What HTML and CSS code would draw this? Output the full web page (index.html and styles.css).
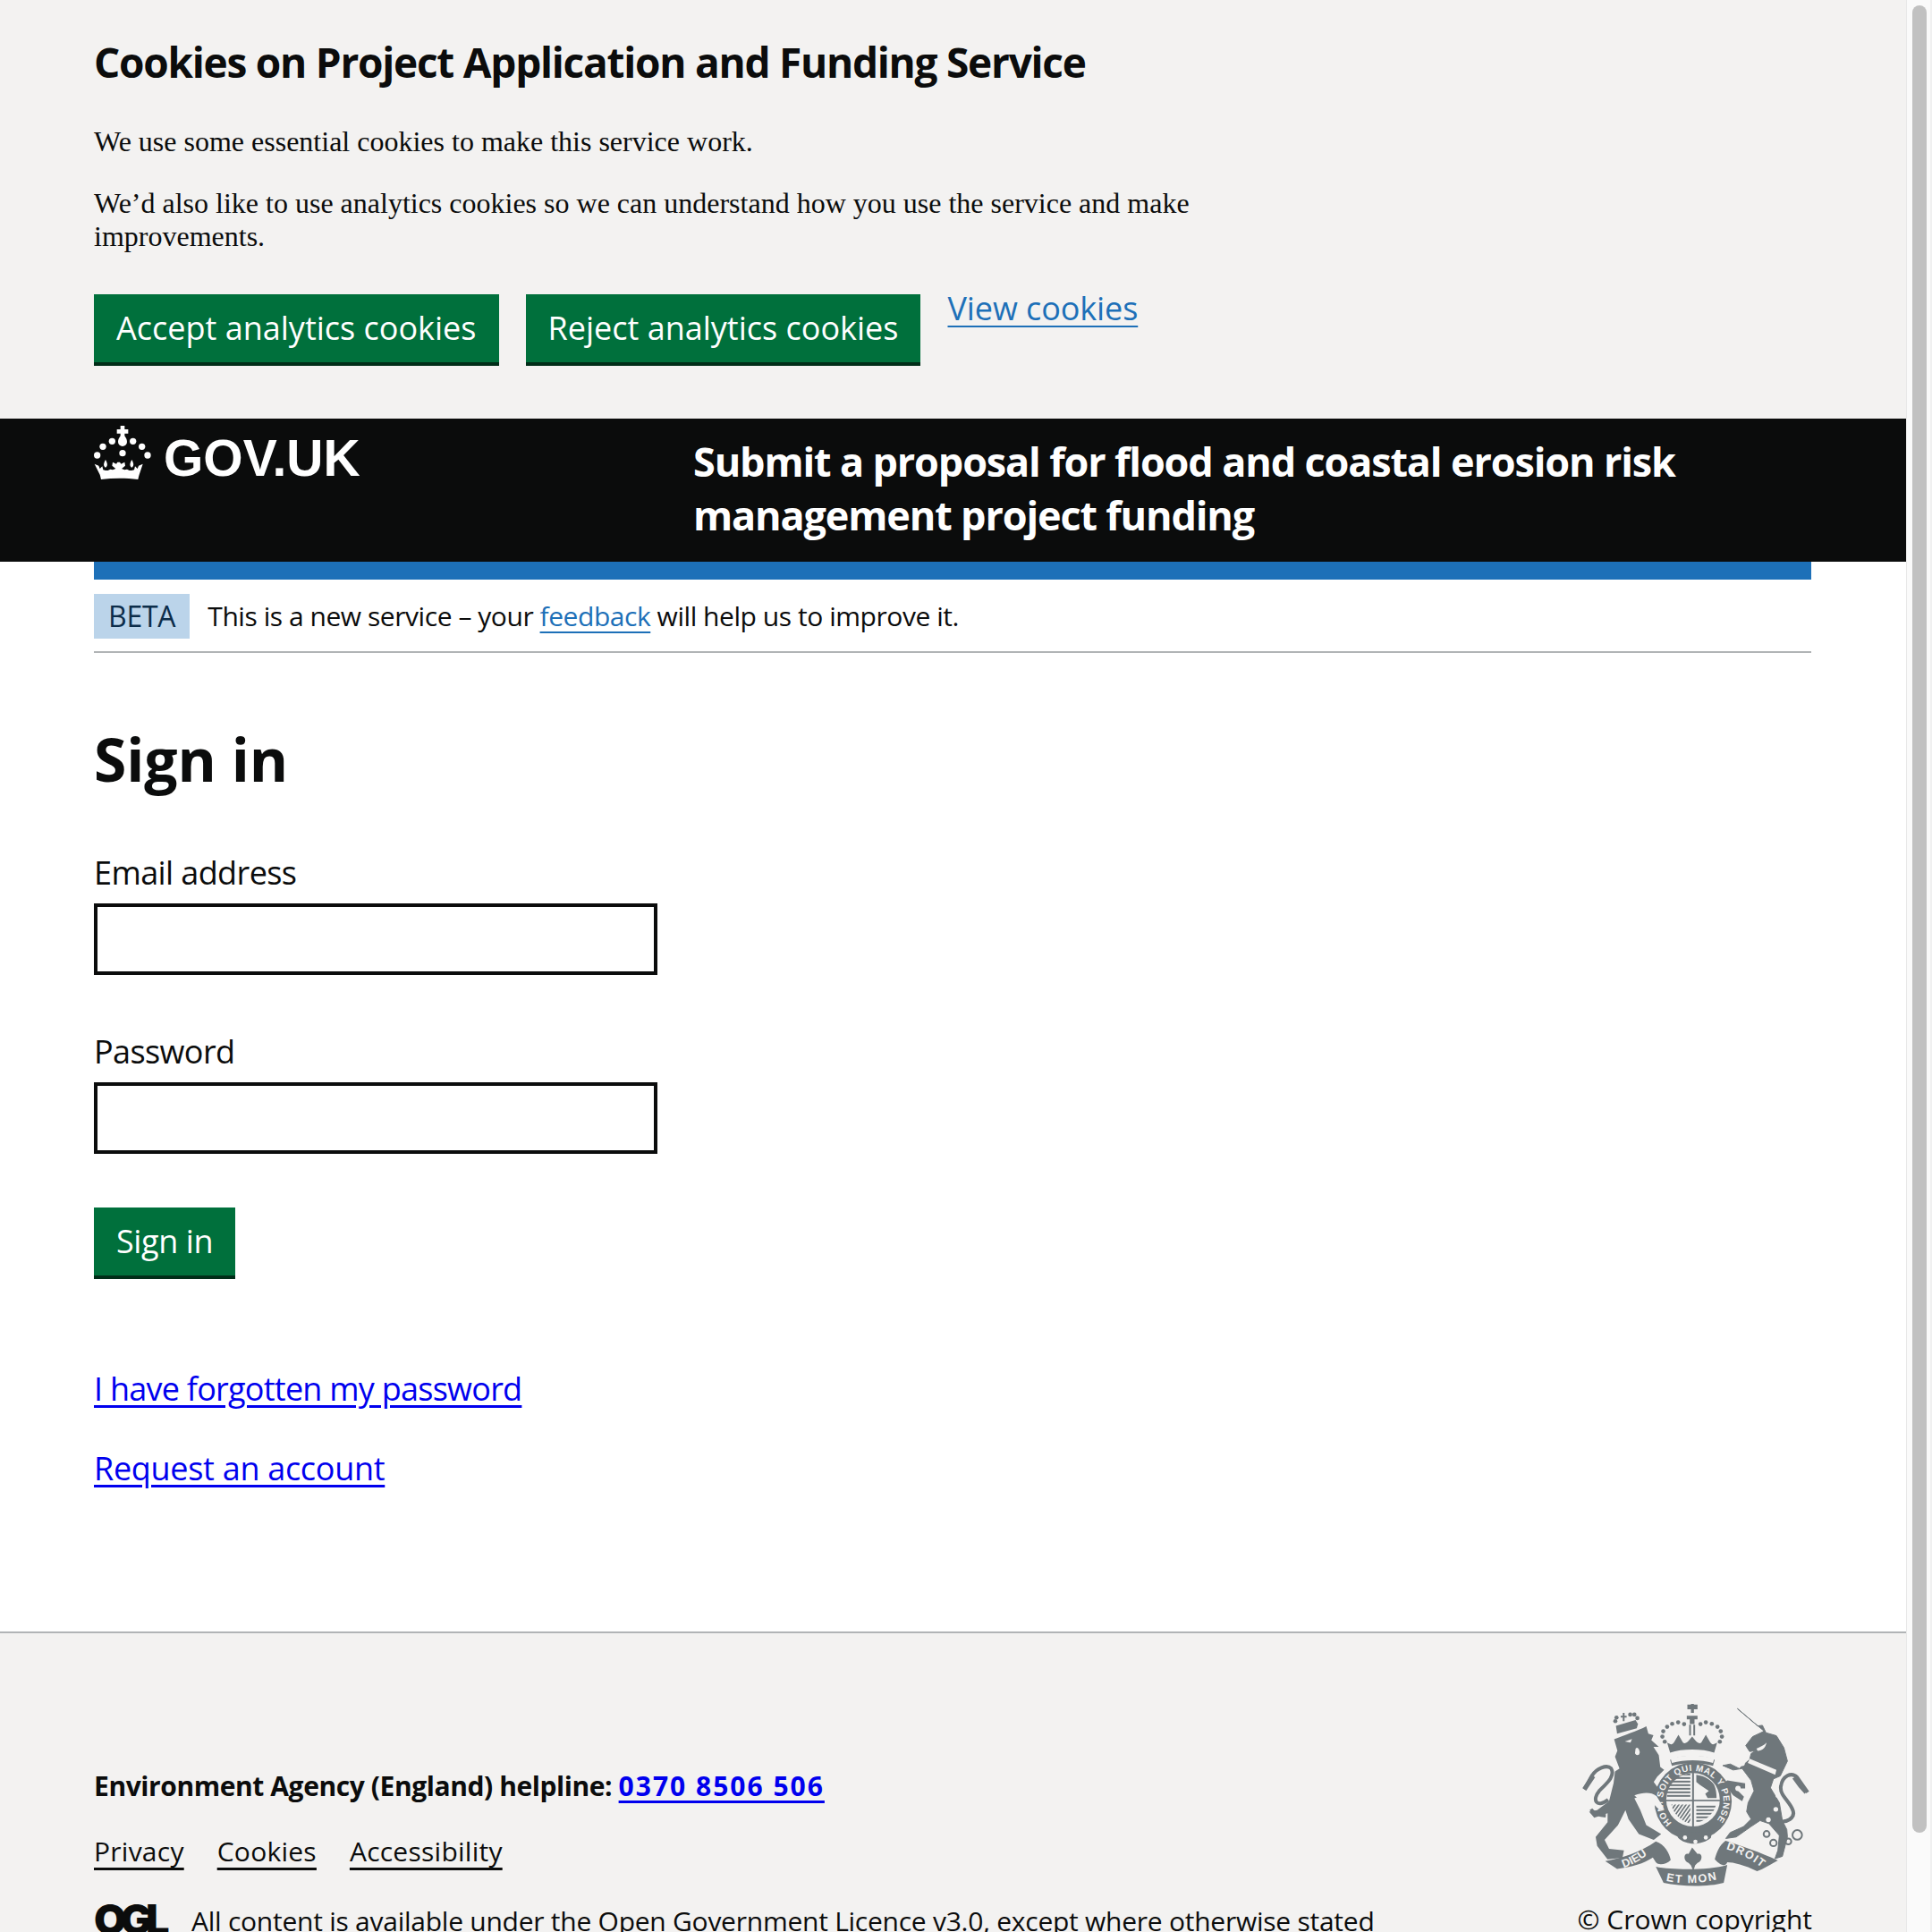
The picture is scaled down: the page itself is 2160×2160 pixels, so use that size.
FILE: index.html
```html
<!DOCTYPE html>
<html lang="en">
<head>
<meta charset="utf-8">
<title>Sign in</title>
<link rel="stylesheet" href="styles.css">
</head>
<body>
<div class="viewport">
<div class="page">
  <section class="cookie-banner">
    <h2 class="cookie-title">Cookies on Project Application and Funding Service</h2>
    <div class="cookie-body">
      <p>We use some essential cookies to make this service work.</p>
      <p>We’d also like to use analytics cookies so we can understand how you use the service and make improvements.</p>
    </div>
    <div class="cookie-actions">
      <button class="btn">Accept analytics cookies</button>
      <button class="btn">Reject analytics cookies</button>
      <a class="link cookie-link" href="#">View cookies</a>
    </div>
  </section>

  <header class="header">
    <a class="logo" href="#">
      <svg class="crown" viewBox="315 108 192 180" aria-hidden="true">
        <g fill="#fff">
          <path d="M404 108h14v12h12v14h-12v8c6 8 8 14 8 20a15 15 0 0 1-30 0c0-6 2-12 8-20v-8h-12v-14h12z"/>
          <circle cx="345" cy="178" r="11"/><circle cx="376" cy="160" r="11"/><circle cx="446" cy="160" r="11"/><circle cx="476" cy="178" r="11"/>
          <circle cx="326" cy="207" r="11"/><circle cx="495" cy="207" r="11"/><circle cx="411" cy="200" r="11"/>
          <path d="M317 236l14 6 4 10 8-8 3 12 8 2v-10c-6-4-9-10 0-26 9 16 6 22 0 26v10h8l8-4 8 2 10-4-12-10 2-12 12 6 4-6 8 0 4 6 12-6 2 12-12 10 10 4 8-2 8 4h8v-10c-6-4-9-10 0-26 9 16 6 22 0 26v10l8-2 3-12 8 8 4-10 14-6-12 36c-2 6-3 12-4 16-40-5-84-5-124 0-1-4-2-10-4-16z"/>
        </g>
      </svg>
      <span class="logo-text">GOV.UK</span>
    </a>
    <div class="service-name">Submit a proposal for flood and coastal erosion risk management project funding</div>
  </header>

  <div class="container">
    <div class="blue-bar"></div>
    <div class="phase-banner">
      <strong class="tag">BETA</strong>
      <span class="phase-text">This is a new service – your <a class="link" href="#">feedback</a> will help us to improve it.</span>
    </div>
    <main class="main">
      <h1 class="title">Sign in</h1>
      <form class="form">
        <label class="label" for="email">Email address</label>
        <input class="input" id="email" type="email">
        <label class="label label-second" for="password">Password</label>
        <input class="input" id="password" type="password">
        <button class="btn btn-signin" type="button">Sign in</button>
      </form>
      <p class="plain-link first"><a href="#">I have forgotten my password</a></p>
      <p class="plain-link second"><a href="#">Request an account</a></p>
    </main>
  </div>

  <footer class="footer">
    <div class="footer-inner">
      <div class="footer-left">
        <p class="helpline">Environment Agency (England) helpline: <a href="#">0370 8506 506</a></p>
        <ul class="footer-links">
          <li><a href="#">Privacy</a></li>
          <li><a href="#">Cookies</a></li>
          <li><a href="#">Accessibility</a></li>
        </ul>
        <div class="licence">
          <span class="ogl">OGL</span>
          <span class="licence-text">All content is available under the Open Government Licence v3.0, except where otherwise stated</span>
        </div>
      </div>
      <div class="footer-right">
        <svg class="crest" viewBox="80 70 760 620" aria-hidden="true">
          <defs>
            <path id="garter" d="M384 478A102 102 0 1 1 526 478"/>
            <path id="scroll-a" d="M222 628c35-12 70-32 106-66"/>
            <path id="scroll-b" d="M364 672c50 12 122 10 176-6"/>
            <path id="scroll-c" d="M566 566c44 12 88 36 124 66"/>
            <pattern id="lines" width="12" height="12" patternUnits="userSpaceOnUse"><rect width="12" height="6" fill="#6f777b"/></pattern>
            <pattern id="diag" width="10" height="10" patternUnits="userSpaceOnUse" patternTransform="rotate(35)"><rect width="5" height="10" fill="#6f777b"/></pattern>
          </defs>
          <g fill="#6f777b">
            <!-- lion -->
            <path d="M190 197C220 184 270 168 298 153l7 25 17 5-7 17 25 22-18 0 18 28 5 40 13 10-23 22-12 18 25 35 15 50-25 5-25-35-25-10-30 10 20 40 20 50 50 30-25 20-50-20-35-50-10-30-25 50-45 50 15 30 50 5-5 25-50 5-35-45-5-30 40-50v-30l-45 15-17-20 27-5 40-30 15-60 5-40 15-10-15-40 8-20z"/>
            <!-- lion crown -->
            <path d="M196 152l66-20 8 14-4 14-66 18z"/>
            <path d="M212 118h7v-10h6v10h7v6h-7v12h-6v-12h-7z"/>
            <circle cx="194" cy="136" r="7"/><circle cx="198" cy="124" r="7"/><circle cx="244" cy="114" r="7"/><circle cx="258" cy="114" r="7"/><circle cx="268" cy="126" r="7"/>
            <!-- unicorn -->
            <path stroke="#6f777b" stroke-width="3" d="M604 94L672 152l16-2 12 25 35 10 25 40 12 45-24 50-23 10-10 30 30 50 10 60 15 30 2 25-17 65-25 8 10-28 5-50-35-40-30-10-30 20-50 35-35 5 15-20 45-20 25-25-15-25 5-30 20-40-10-35-15-20-15-20-30 5-35-15 25-5 30 15 35-30 5-20 15-10-20 3-13-20 23-30 32-15 6-4z"/>
            <path d="M630 345l-60-10-12 10 32 40 30 20 6-15-28-28 32 0z"/>
            <!-- crown -->
            <path d="M436 80h12v-2h10v2h12v16h-12v12h-10V96h-12z"/>
            <path d="M434 118h36v12h-36zM444 130h16v16h-16zM442 148h6v36h-6zM456 148h6v36h-6z"/>
            <path d="M368 208c12 6 16 10 24-2l14-24 14 24c4 8 12 4 20-4l12-14 12 14c8 8 16 12 20 4l14-24 14 24c8 12 12 8 24 2l-10 34c-40-14-108-14-148 0z"/>
            <path d="M378 266c40-18 110-18 150 0l-6 20c-40-12-96-12-138 0z"/>
            <!-- garter -->
            <circle cx="455" cy="405" r="130"/>
            <!-- scrolls -->
            <path d="M160 606c50-8 120-30 170-66 30 10 46 40 50 62-12 14-40 20-50 8l-10-16c-30 20-70 32-120 38z"/>
            <path d="M330 625c60 12 180 12 240-6l-12 60c-50 14-140 14-202 0z"/>
            <path d="M528 600c6-20 14-46 36-62 50 16 120 40 176 66-16 8-50 30-70 36-40-20-80-30-100-30-4 14-20 14-42-10z"/>
            <path d="M452 560l18 22c16-6 20 22 0 30l-8 8-6 20-8-20-8-8c-20-8-16-36 0-30z"/>
            <path d="M395 500c40 14 90 14 125 0l-5 28c-30 26-85 26-110 0z"/>
          </g>
          <g fill="none" stroke="#6f777b">
            <path d="M170 400c-40 30-55 0-30-30 25-25 55-50 40-75-15-15-50 0-65 25l-25 45" stroke-width="12"/>
            <path d="M120 320c-10 15-20 30-30 45" stroke-width="15"/>
            <path d="M112 432c10 14 30 20 50 22" stroke-width="11"/>
            <path d="M740 470c30 10 60-10 50-35-10-30-45-50-40-80 5-35 35-50 55-30l35 50" stroke-width="12"/>
            <path d="M795 325c10 15 25 35 40 50" stroke-width="15"/>
            <circle cx="702" cy="515" r="10" stroke-width="6"/><circle cx="725" cy="545" r="11" stroke-width="6"/><circle cx="775" cy="540" r="10" stroke-width="6"/><circle cx="805" cy="518" r="16" stroke-width="6"/>
          </g>
          <g fill="#6f777b">
            <circle cx="385" cy="145" r="7"/><circle cx="405" cy="140" r="7"/><circle cx="425" cy="146" r="7"/><circle cx="368" cy="155" r="7"/><circle cx="355" cy="170" r="7"/><circle cx="352" cy="188" r="7"/><circle cx="360" cy="205" r="7"/>
            <circle cx="480" cy="146" r="7"/><circle cx="498" cy="140" r="7"/><circle cx="518" cy="145" r="7"/><circle cx="537" cy="155" r="7"/><circle cx="548" cy="170" r="7"/><circle cx="552" cy="188" r="7"/><circle cx="545" cy="205" r="7"/>
          </g>
          <g fill="#f3f2f1">
            <path d="M380 262c40-14 105-14 146 0l-4 14c-40-12-96-12-138 0z"/>
            <circle cx="455" cy="400" r="90"/>
            <circle cx="428" cy="527" r="7"/><circle cx="463" cy="541" r="7"/><circle cx="498" cy="527" r="7"/>
            <circle cx="620" cy="278" r="9"/><circle cx="606" cy="362" r="9"/><circle cx="740" cy="385" r="8"/><circle cx="733" cy="432" r="8"/><circle cx="708" cy="467" r="8"/>
            <path d="M226 204l24-8-5 12zM262 228a9 14 0 0 1 12 20 10 10 0 0 1-14-4z"/>
            <path d="M258 385c30-10 55-12 75 3l25 42-15 5-25-25-20 0c-15-5-30-15-40-25z"/>
            <path d="M645 262l90 38-4 16-92-40z"/>
            <path d="M668 228c14-6 24-10 34-20-4 18-14 26-30 28z"/>
          </g>
          <g fill="#6f777b">
            <rect x="362" y="400" width="186" height="5"/><rect x="452" y="308" width="6" height="190"/>
            <path fill="url(#lines)" d="M374 330l72-20v84h-78c-2-24 0-44 6-64z"/>
            <path d="M466 316c30 4 50 18 60 34 6 14 8 28 8 44h-30l-8-14 12-10-30-20-12-10z"/>
            <path fill="url(#diag)" d="M382 416h64v64c-30-8-56-30-64-64z"/>
            <path fill="url(#lines)" d="M466 416h66c-6 30-34 54-66 62z"/>
          </g>
          <g class="crest-text">
            <text class="garter-text"><textPath href="#garter" textLength="470" lengthAdjust="spacing">HONI SOIT QUI MAL Y PENSE</textPath></text>
            <text><textPath href="#scroll-a">DIEU</textPath></text>
            <text><textPath href="#scroll-b" textLength="172">ET MON</textPath></text>
            <text><textPath href="#scroll-c" textLength="135">DROIT</textPath></text>
          </g>
        </svg>
        <a class="copyright" href="#">© Crown copyright</a>
      </div>
    </div>
  </footer>
</div>
<div class="scrollbar" aria-hidden="true"><div class="scrollbar-thumb"></div></div>
</div>
</body>
</html>
```
FILE: styles.css
```css
* { box-sizing: border-box; }
html, body { margin: 0; padding: 0; }
body { background: #fff; color: #0b0c0c; font-family: "Open Sans", "Noto Sans", Arial, sans-serif; }
.viewport { display: flex; height: 2160px; overflow: hidden; }
.page { flex: 0 0 2131px; width: 2131px; min-width: 0; }
.scrollbar { flex: 0 0 29px; height: 100%; background: #fafafa; border-left: 1px solid #e8e8e8; border-right: 2px solid #f0f0f0; padding: 6px 4px 0 6px; }
.scrollbar-thumb { width: 16px; height: 2043px; background: #c1c1c1; border-radius: 8px; }

.cookie-banner { height: 468px; background: #f3f2f1; padding: 40px 105px 0; }
.cookie-title { margin: 0; font-size: 46px; line-height: 58px; font-weight: 700; letter-spacing: -1.25px; }
.cookie-body { margin-top: 42px; width: 1280px; font-family: "Liberation Serif", "Times New Roman", serif; font-size: 32px; line-height: 37px; }
.cookie-body p { margin: 0 0 32px; }
.cookie-actions { margin-top: 46px; display: flex; align-items: flex-start; gap: 30px; }
.btn { appearance: none; border: 0; border-radius: 0; background: #00703c; color: #fff; font-family: inherit; font-size: 36px; line-height: 44px; height: 80px; padding: 0 25px 5px; box-shadow: inset 0 -4px 0 #002d18; white-space: nowrap; }
.link { color: #1d70b8; text-decoration: underline; text-underline-offset: 6px; text-decoration-thickness: 2px; }
.cookie-link { font-size: 36px; line-height: 44px; margin-top: -6px; letter-spacing: -0.1px; }

.header { height: 160px; background: #0b0c0c; color: #fff; padding: 6px 105px 0; display: flex; align-items: flex-start; }
.logo { flex: 0 0 670px; display: flex; align-items: flex-start; color: #fff; text-decoration: none; gap: 14px; }
.crown { width: 64px; height: 60px; margin-top: 2px; }
.logo-text { font-family: "Liberation Sans", Arial, sans-serif; font-weight: 700; font-size: 57px; line-height: 60px; margin-top: 8px; }
.service-name { flex: 1; font-size: 45px; line-height: 60px; font-weight: 700; margin-top: 12px; letter-spacing: -1.15px; padding-right: 100px; }

.container { width: 1920px; margin: 0 105px; }
.blue-bar { height: 20px; background: #1d70b8; }
.phase-banner { display: flex; align-items: center; height: 82px; margin: 0; padding: 16px 0 14px; border-bottom: 2px solid #b1b4b6; }
.tag { background: #bbd4ea; color: #0c2d4a; font-weight: 400; font-size: 32px; line-height: 50px; height: 50px; padding: 0 16px; margin-right: 20px; letter-spacing: -0.25px; }
.phase-text { font-size: 30px; letter-spacing: -0.45px; margin-top: -2px; }
.main { padding-top: 73px; height: 1094px; }
.title { margin: 0 0 59px; font-size: 66px; line-height: 90px; font-weight: 700; letter-spacing: -0.1px; }
.form { display: flex; flex-direction: column; align-items: flex-start; }
.label { font-size: 36px; line-height: 48px; margin-bottom: 10px; letter-spacing: -0.6px; }
.label-second { margin-top: 62px; }
.input { width: 630px; height: 80px; border: 4px solid #0b0c0c; background: #fff; border-radius: 0; }
.btn-signin { margin-top: 60px; letter-spacing: -0.4px; }
.plain-link { margin: 0; font-size: 36px; line-height: 48px; letter-spacing: -0.75px; }
.plain-link.second { letter-spacing: -0.3px; }
.plain-link a { color: #0000ee; text-decoration: underline; text-underline-offset: 5px; }
.plain-link.first { margin: 99px 0 41px; }

.footer { background: #f3f2f1; border-top: 2px solid #b1b4b6; height: 400px; padding: 76px 105px 0; }
.footer-inner { display: flex; justify-content: space-between; align-items: flex-start; }
.footer-left { padding-top: 72px; }
.helpline { margin: 0; font-size: 30px; line-height: 46px; font-weight: 700; letter-spacing: -0.42px; }
.helpline a { color: #0000ee; text-decoration: underline; text-underline-offset: 5px; letter-spacing: 2px; }
.footer-links { list-style: none; margin: 27px 0 0; padding: 0; display: flex; gap: 37px; font-size: 30px; line-height: 46px; letter-spacing: 0.25px; }
.footer-links a { color: #0b0c0c; text-decoration: underline; text-underline-offset: 7px; }
.licence { display: flex; align-items: flex-start; gap: 27px; margin-top: 25px; }
.ogl { font-family: Inter, "Liberation Sans", sans-serif; font-weight: 900; font-size: 47px; line-height: 46px; letter-spacing: -7px; width: 82px; margin-top: 5px; }
.licence-text { font-size: 30px; line-height: 46px; margin-top: 7px; white-space: nowrap; letter-spacing: -0.25px; }
.footer-right { width: 260px; display: flex; flex-direction: column; align-items: flex-end; }
.crest { width: 253px; height: 207px; margin-right: 5px; overflow: visible; }
.copyright { font-size: 30px; line-height: 46px; color: #0b0c0c; text-decoration: none; white-space: nowrap; margin-top: 14px; }
.crest-text text { fill: #f3f2f1; font-family: "Liberation Sans", sans-serif; font-size: 38px; font-weight: 700; }
.crest-text .garter-text { font-size: 30px; }
```
